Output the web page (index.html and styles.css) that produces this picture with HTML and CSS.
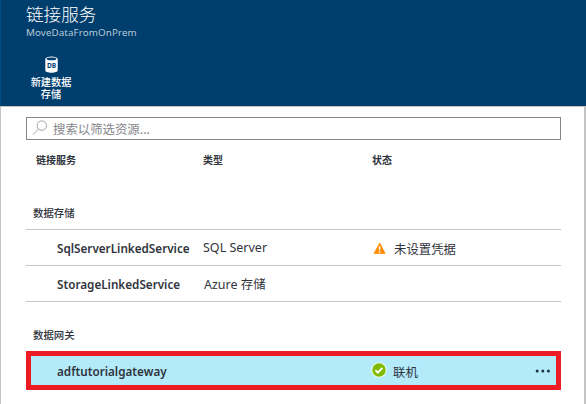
FILE: index.html
```html
<!DOCTYPE html>
<html lang="zh-CN">
<head>
<meta charset="utf-8">
<title>链接服务</title>
<link rel="stylesheet" href="styles.css">
</head>
<body>
<div class="blade">
  <header class="header">
    <h1 class="title">链接服务</h1>
    <div class="subtitle">MoveDataFromOnPrem</div>
    <div class="command">
      <svg class="db-icon" width="13" height="17" viewBox="0 0 13 17">
        <path d="M.3 2.7v11.8c0 1.2 2.7 2.2 6.2 2.2s6.2-1 6.2-2.2V2.7z" fill="#fff"/>
        <ellipse cx="6.5" cy="2.6" rx="6" ry="2" fill="#fff"/>
        <ellipse cx="6.5" cy="2.9" rx="4.9" ry="1.3" fill="#003e6d"/>
        <text class="db-text" x="6.5" y="11.8" text-anchor="middle">DB</text>
      </svg>
      <div class="command-label">新建数据<br>存储</div>
    </div>
  </header>
  <main class="content">
    <div class="search">
      <svg class="search-icon" width="16" height="16" viewBox="0 0 16 16" fill="none" stroke="#a5a5a9">
        <circle cx="9.8" cy="5.6" r="4.7"/>
        <path d="M6.4 9.2L1 14.6"/>
      </svg>
      <span class="placeholder">搜索以筛选资源...</span>
    </div>
    <div class="row columns">
      <div>链接服务</div><div>类型</div><div>状态</div>
    </div>
    <div class="group group-store">数据存储</div>
    <div class="row item">
      <div class="name sql-name">SqlServerLinkedService</div>
      <div class="type sql-type">SQL Server</div>
      <div class="status">
        <svg class="status-icon" width="14" height="14" viewBox="0 0 14 14">
          <path d="M6.7 2L12.1 12.4H1.1z" fill="#ff8c00" stroke="#ff8c00" stroke-width=".8" stroke-linejoin="round"/>
          <path d="M6.6 5.2v4.1M6.6 10.3v1.4" stroke="#fff" stroke-width="1.5"/>
        </svg>
        <span>未设置凭据</span>
      </div>
    </div>
    <div class="row item">
      <div class="name storage-name">StorageLinkedService</div>
      <div class="type azure-type">Azure <span class="cjk">存储</span></div>
      <div></div>
    </div>
    <div class="group group-gateway">数据网关</div>
    <div class="row selected">
      <div class="name gateway-name">adftutorialgateway</div>
      <div></div>
      <div class="status">
        <svg class="status-icon check" width="16" height="16" viewBox="0 0 16 16">
          <circle cx="8" cy="8" r="7.7" fill="#f3fbe9"/>
          <circle cx="8" cy="8" r="6.7" fill="#7fba00"/>
          <path d="M4.4 8.2l2.4 2.4 4.6-4.8" fill="none" stroke="#fff" stroke-width="1.9"/>
        </svg>
        <span>联机</span>
      </div>
      <svg class="more" width="16" height="4" viewBox="0 0 16 4" fill="#1d3540">
        <circle cx="2.2" cy="2" r="1.5"/><circle cx="7.8" cy="2" r="1.5"/><circle cx="13.4" cy="2" r="1.5"/>
      </svg>
    </div>
  </main>
</div>
</body>
</html>
```
FILE: styles.css
```css
* { box-sizing: border-box; }
body {
  margin: 0;
  background: #fff;
  color: #30343c;
  font-family: "Noto Sans", "Noto Sans CJK SC", sans-serif;
  font-size: 12.5px;
}
.blade { width: 586px; height: 404px; overflow: hidden; }
.header {
  height: 106px;
  padding: 2px 26px 0;
  background: #003e6d;
  color: #fff;
  border-left: 1px solid #004b83;
  padding-left: 25px;
}
.title {
  margin: 0;
  font: 300 17.6px/24px "Noto Sans CJK SC", sans-serif;
}
.subtitle {
  height: 14px;
  font-size: 9.8px;
  line-height: 14px;
  color: #b8c8d6;
  letter-spacing: 0.1px;
}
.command {
  display: flex;
  flex-direction: column;
  align-items: center;
  width: 50px;
  margin-top: 16px;
}
.db-icon { display: block; }
.db-text { font: 700 6.5px "Noto Sans", sans-serif; fill: #003e6d; }
.command-label {
  margin-top: 3px;
  font: 500 10.2px/12px "Noto Sans CJK SC", sans-serif;
  text-align: center;
}
.content {
  height: 298px;
  padding: 10px 23px 0 25px;
  border: solid #c3c3c3;
  border-width: 1px 2px 0 1px;
}
.search {
  display: flex;
  align-items: center;
  height: 23px;
  padding-left: 5px;
  border: 1px solid #85868c;
}
.search-icon { margin-top: -2px; }
.placeholder {
  margin-left: 5px;
  font: 400 12.4px/20px "Noto Sans CJK SC", sans-serif;
  color: #85868b;
}
.row {
  display: grid;
  grid-template-columns: 177px 170px 1fr;
  align-items: center;
}
.columns {
  height: 20px;
  margin-top: 10px;
  padding-left: 10px;
  grid-template-columns: 167px 169px 1fr;
  font: 700 10px/20px "Noto Sans CJK SC", sans-serif;
}
.group {
  height: 20px;
  padding-left: 7px;
  font: 500 10.4px/20px "Noto Sans CJK SC", sans-serif;
}
.group-store { margin: 33px 0 6px; }
.item { height: 36px; border-top: 1px solid #c5c5c7; }
.group-gateway { padding-top: 0; margin-bottom: 6px; height: 44px; line-height: 66px; border-top: 1px solid #c5c5c7; }
.name { padding-left: 31px; font-weight: 600; font-size: 11.7px; white-space: nowrap; }
.type { white-space: nowrap; }
.azure-type { padding-left: 1px; }
.cjk { font: 400 12.4px "Noto Sans CJK SC", sans-serif; }
.status {
  display: flex;
  align-items: center;
  font: 400 12.4px/20px "Noto Sans CJK SC", sans-serif;
}
.status span { margin: 2px 0 0 7px; }
.status-icon { width: 14px; flex: none; }
.selected {
  position: relative;
  height: 39px;
  grid-template-columns: 172px 168px 1fr auto;
  border: 5px solid #ed1b24;
  background: #b3ebfb;
}
.selected .name { padding-left: 26px; }
.selected .status-icon { width: 16px; margin-top: -2px; }
.selected .status span { margin-left: 6px; }
.more { margin-right: 5px; }
```
